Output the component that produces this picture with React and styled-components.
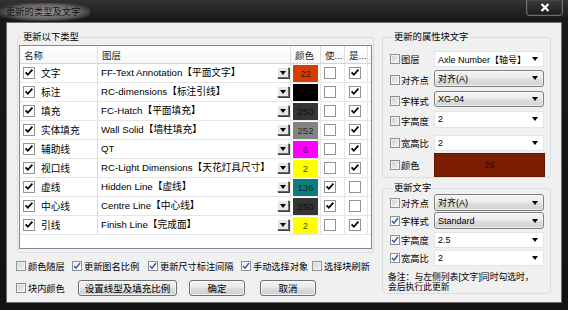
import styled, { createGlobalStyle } from 'styled-components';

const GlobalStyle = createGlobalStyle`
  html, body {
    margin: 0;
    padding: 0;
    background: #000;
  }
  body {
    font-family: "Liberation Sans", "Noto Sans CJK SC", sans-serif;
    font-size: 9.3px;
    color: #000;
  }
  * {
    box-sizing: border-box;
  }
`;

const layers = [
  { name: '文字', layer: 'FF-Text Annotation【平面文字】', color: '#d63d02', aci: '22', use: false, show: true },
  { name: '标注', layer: 'RC-dimensions【标注引线】', color: '#000000', aci: '', use: false, show: true },
  { name: '填充', layer: 'FC-Hatch【平面填充】', color: '#343434', aci: '250', use: false, show: true },
  { name: '实体填充', layer: 'Wall Solid【墙柱填充】', color: '#838383', aci: '252', use: false, show: true },
  { name: '辅助线', layer: 'QT', color: '#ff00ff', aci: '6', use: false, show: true },
  { name: '视口线', layer: 'RC-Light Dimensions【天花灯具尺寸】', color: '#ffff00', aci: '2', use: false, show: true },
  { name: '虚线', layer: 'Hidden Line【虚线】', color: '#0b7f7d', aci: '136', use: true, show: false },
  { name: '中心线', layer: 'Centre Line【中心线】', color: '#343434', aci: '250', use: true, show: false },
  { name: '引线', layer: 'Finish Line【完成面】', color: '#ffff00', aci: '2', use: false, show: true },
];

const options = [
  { label: '颜色随层', on: false },
  { label: '更新图名比例', on: true },
  { label: '更新尺寸标注间隔', on: true },
  { label: '手动选择对象', on: true },
  { label: '选择块刷新', on: false },
];

const ClassicCheck = ({ checked }) => (
  <ClassicBox>
    {checked && (
      <svg width="10" height="10" viewBox="0 0 10 10">
        <path d="M1.6 4.4 L3.8 6.8 L8.4 1.6" fill="none" stroke="#000" strokeWidth="1.7" />
      </svg>
    )}
  </ClassicBox>
);

const AeroCheck = ({ checked, dy }) => (
  <AeroBox $on={checked} $dy={dy}>
    {checked && (
      <svg width="8" height="8" viewBox="0 0 8 8">
        <path d="M1 4 L3 6.2 L7 1" fill="none" stroke="#2f55b0" strokeWidth="1.4" />
      </svg>
    )}
  </AeroBox>
);

const Combo = ({ kind, h, children }) => (
  <ComboBox $kind={kind} $h={h}>
    <span>{children}</span>
    <Arrow />
  </ComboBox>
);

// one line of the right-hand panels: check, caption, control
const Field = ({ mt, h, dy, checked, label, children }) => (
  <FieldRow $mt={mt} $h={h}>
    <AeroCheck checked={checked} dy={dy} />
    <Label $dy={dy}>{label}</Label>
    {children}
  </FieldRow>
);

const App = () => {
  return (
    <>
      <GlobalStyle />
      <Window>
        <TitleBar>
          <Title>更新的类型及文字</Title>
          <CloseButton>
            <svg width="10" height="9" viewBox="0 0 10 9">
              <path d="M1.5 1 L8.5 8 M8.5 1 L1.5 8" stroke="#fff" strokeWidth="2.2" />
            </svg>
          </CloseButton>
        </TitleBar>
        <Client>
          <LeftCol>
            <Group $pad="1px 1px 3px">
              <Legend>更新以下类型</Legend>
              <Table>
                <HeadRow>
                  <HeadCell>名称</HeadCell>
                  <HeadCell>图层</HeadCell>
                  <HeadCell>颜色</HeadCell>
                  <HeadCell>使...</HeadCell>
                  <HeadCell>是...</HeadCell>
                  <HeadCell $last />
                </HeadRow>
                {layers.map(row => (
                  <BodyRow key={row.name}>
                    <NameCell>
                      <ClassicCheck checked />
                      <span>{row.name}</span>
                    </NameCell>
                    <LayerCell>
                      <LayerText>{row.layer}</LayerText>
                      <DropButton><Arrow /></DropButton>
                    </LayerCell>
                    <ColorCell>
                      <Swatch $bg={row.color}>{row.aci}</Swatch>
                    </ColorCell>
                    <FlagCell $pl={3}><ClassicCheck checked={row.use} /></FlagCell>
                    <FlagCell $pl={4}><ClassicCheck checked={row.show} /></FlagCell>
                    <FlagCell $last />
                  </BodyRow>
                ))}
              </Table>
            </Group>
            <Options>
              {options.map(o => (
                <CheckItem key={o.label}>
                  <AeroCheck checked={o.on} />
                  <span>{o.label}</span>
                </CheckItem>
              ))}
            </Options>
            <ActionRow>
              <CheckItem>
                <AeroCheck checked={false} />
                <span>块内颜色</span>
              </CheckItem>
              <Button $w={99}>设置线型及填充比例</Button>
              <Button $w={56}>确定</Button>
              <Button $w={56}>取消</Button>
            </ActionRow>
          </LeftCol>

          <RightCol>
            <Group $pad="0 7px">
              <Legend>更新的属性块文字</Legend>
              <Field mt={8} h={16} label="图层">
                <Combo kind="edit" h={16}>Axle Number【轴号】</Combo>
              </Field>
              <Field mt={2} h={17} dy={2} label="对齐点">
                <Combo kind="list" h={17}>对齐(A)</Combo>
              </Field>
              <Field mt={4} h={16} dy={2} label="字样式">
                <Combo kind="list" h={16}>XG-04</Combo>
              </Field>
              <Field mt={4} h={17} dy={2} label="字高度">
                <Combo kind="edit" h={17}>2</Combo>
              </Field>
              <Field mt={8} h={16} label="宽高比">
                <Combo kind="edit" h={16}>2</Combo>
              </Field>
              <Field mt={2} h={24} label="颜色">
                <ColorBar>26</ColorBar>
              </Field>
            </Group>

            <Group $pad="0 7px 1px">
              <Legend>更新文字</Legend>
              <Field mt={0} h={17} label="对齐点">
                <Combo kind="list" h={17}>对齐(A)</Combo>
              </Field>
              <Field mt={1} h={17} checked label="字样式">
                <Combo kind="list" h={17}>Standard</Combo>
              </Field>
              <Field mt={3} h={16} checked label="字高度">
                <Combo kind="edit" h={16}>2.5</Combo>
              </Field>
              <Field mt={2} h={16} checked label="宽高比">
                <Combo kind="edit" h={16}>2</Combo>
              </Field>
              <Note>
                备注：与左侧列表[文字]同时勾选时，<br />
                会后执行此更新
              </Note>
            </Group>
          </RightCol>
        </Client>
      </Window>
    </>
  );
};

export default App;

const Window = styled.div`
  width: 568px;
  height: 310px;
  display: flex;
  flex-direction: column;
  padding: 0 6px 7px 6px;
  background: linear-gradient(180deg, #333 0px, #181818 20px, #121212 100%);
`;

const TitleBar = styled.div`
  height: 22px;
  flex: none;
  display: flex;
  justify-content: space-between;
  align-items: flex-start;
`;

const Title = styled.div`
  margin: 3px 0 0 -6px;
  padding: 0 10px 0 6px;
  height: 18px;
  line-height: 18px;
  font-size: 9.3px;
  color: #141414;
  background: radial-gradient(ellipse at center, rgba(170, 170, 170, 0.9) 0%, rgba(135, 135, 135, 0.65) 55%, rgba(90, 90, 90, 0) 80%);
`;

const CloseButton = styled.div`
  width: 37px;
  height: 16px;
  margin-right: -1px;
  display: flex;
  align-items: center;
  justify-content: center;
  border: 1px solid #6d6d6d;
  border-top: none;
  border-radius: 0 0 4px 4px;
  background: linear-gradient(180deg, #3b3b3b, #1d1d1d);
  box-shadow: inset 0 0 0 1px rgba(255, 255, 255, 0.07);
`;

const Client = styled.div`
  flex: 1;
  display: flex;
  align-items: flex-start;
  gap: 8px;
  padding: 8px 10px 0;
  background: #f0f0f0;
  border: 1px solid #6f6f6f;
`;

const LeftCol = styled.div`
  width: 357px;
  flex: none;
  display: flex;
  flex-direction: column;
`;

const RightCol = styled.div`
  width: 169px;
  flex: none;
  display: flex;
  flex-direction: column;
  gap: 4px;
`;

const Group = styled.fieldset`
  margin: 0;
  min-width: 0;
  padding: ${p => p.$pad};
  border: 1px solid #d5dfe5;
  border-radius: 3px;
`;

const Legend = styled.legend`
  margin-left: 3px;
  padding: 0 1px;
  line-height: 12px;
  font-size: 9.3px;
  color: #000;
`;

const Table = styled.div`
  margin-top: 1px;
  height: 204px;
  border: 1px solid #828790;
  background: #fff;
  overflow: hidden;
`;

const columns = '78px 193px 30px 24px 23px 1fr';

const HeadRow = styled.div`
  display: grid;
  grid-template-columns: ${columns};
  height: 18px;
  background: linear-gradient(180deg, #ffffff, #f6f7f9);
  border-bottom: 1px solid #d5d5d5;
`;

const HeadCell = styled.div`
  display: flex;
  align-items: center;
  padding-left: 4px;
  font-size: 9.5px;
  color: #1e1e1e;
  white-space: nowrap;
  border-right: ${p => (p.$last ? 'none' : '1px solid #dedede')};
`;

const BodyRow = styled.div`
  display: grid;
  grid-template-columns: ${columns};
  height: 19px;
  border-bottom: 1px solid #e6e6e6;
`;

const NameCell = styled.div`
  display: flex;
  align-items: center;
  gap: 6px;
  padding-left: 3px;
  font-size: 9.7px;
  border-right: 1px solid #d9d9d9;
`;

const LayerCell = styled.div`
  display: flex;
  align-items: flex-start;
  justify-content: space-between;
  padding: 0 1px 0 3px;
  font-size: 9.7px;
  border-right: 1px solid #e6e6e6;
  min-width: 0;
`;

const LayerText = styled.span`
  line-height: 18px;
  white-space: nowrap;
  overflow: hidden;
`;

const DropButton = styled.span`
  flex: none;
  width: 12px;
  height: 11px;
  margin-top: 3px;
  display: flex;
  align-items: center;
  justify-content: center;
  background: #e6e6e6;
  border-top: 1px solid #fff;
  border-left: 1px solid #fff;
  border-right: 1px solid #6a6a6a;
  border-bottom: 1px solid #6a6a6a;
  box-shadow: 1px 1px 0 #3c3c3c;
`;

const ColorCell = styled.div`
  display: flex;
  padding: 1px 2px 0 2px;
  border-right: 1px solid #e6e6e6;
`;

const Swatch = styled.div`
  flex: 1;
  display: flex;
  align-items: center;
  justify-content: center;
  font-size: 9.5px;
  color: rgba(0, 0, 0, 0.72);
  background: ${p => p.$bg};
`;

const FlagCell = styled.div`
  display: flex;
  align-items: center;
  padding-left: ${p => p.$pl || 0}px;
  border-right: ${p => (p.$last ? 'none' : '1px solid #e6e6e6')};
`;

const ClassicBox = styled.span`
  flex: none;
  width: 12px;
  height: 12px;
  display: inline-flex;
  align-items: center;
  justify-content: center;
  background: #fff;
  border: 1px solid #939393;
`;

const AeroBox = styled.span`
  flex: none;
  width: 10px;
  height: 10px;
  margin-top: ${p => (p.$dy || 0) * 2}px;
  display: inline-flex;
  align-items: center;
  justify-content: center;
  border: 1px solid #8e8f8f;
  background: ${p => (p.$on
    ? 'linear-gradient(135deg, #eef0f3, #ffffff)'
    : 'linear-gradient(135deg, #cfcfcf, #f3f3f3)')};
  box-shadow: inset 0 0 0 1px rgba(255, 255, 255, 0.6);
`;

const Options = styled.div`
  margin: 6px 0 0 -1px;
  height: 14px;
  display: grid;
  grid-template-columns: 56px 76px 93px 71px auto;
  align-items: center;
`;

const CheckItem = styled.label`
  display: flex;
  align-items: center;
  gap: 2px;
  white-space: nowrap;
  font-size: 9.2px;
`;

const ActionRow = styled.div`
  margin: 7px 0 0 -1px;
  height: 16px;
  display: grid;
  grid-template-columns: 62px 111px 71px 56px;
  align-items: center;
`;

const Button = styled.button`
  width: ${p => p.$w}px;
  height: 16px;
  padding: 0;
  font-family: inherit;
  font-size: 9.5px;
  color: #000;
  border: 1px solid #707070;
  border-radius: 3px;
  background: linear-gradient(180deg, #f2f2f2 0%, #ebebeb 45%, #dddddd 50%, #cfcfcf 100%);
  box-shadow: inset 0 0 0 1px rgba(255, 255, 255, 0.7);
`;

const FieldRow = styled.div`
  margin-top: ${p => p.$mt}px;
  height: ${p => p.$h}px;
  display: grid;
  grid-template-columns: 10px 32px 110px;
  column-gap: 1px;
  align-items: center;
`;

const Label = styled.span`
  margin: ${p => (p.$dy || 0) * 2}px 0 0 0;
  font-size: 9.3px;
  white-space: nowrap;
`;

const ComboBox = styled.div`
  height: ${p => p.$h}px;
  display: flex;
  align-items: center;
  justify-content: space-between;
  padding: 0 5px 0 3px;
  font-size: 9px;
  white-space: nowrap;
  ${p => (p.$kind === 'list'
    ? `
    border: 1px solid #7e7e7e;
    border-radius: 3px;
    background: linear-gradient(180deg, #f4f4f4 0%, #ececec 45%, #dedede 55%, #d3d3d3 100%);
    box-shadow: inset 0 0 0 1px rgba(255,255,255,0.6);
  `
    : `
    border: 1px solid #e1e4ea;
    background: #fff;
  `)}
`;

const Arrow = styled.span`
  flex: none;
  width: 0;
  height: 0;
  border-left: 3px solid transparent;
  border-right: 3px solid transparent;
  border-top: 4px solid #000;
`;

const ColorBar = styled.div`
  width: 111px;
  height: 24px;
  display: flex;
  align-items: center;
  justify-content: center;
  font-size: 9px;
  color: #2a0700;
  background: #7b1d01;
  border: 1px solid #5e1600;
`;

const Note = styled.div`
  margin: 6px 0 0 -2px;
  line-height: 10px;
  font-size: 8.8px;
  white-space: nowrap;
`;
